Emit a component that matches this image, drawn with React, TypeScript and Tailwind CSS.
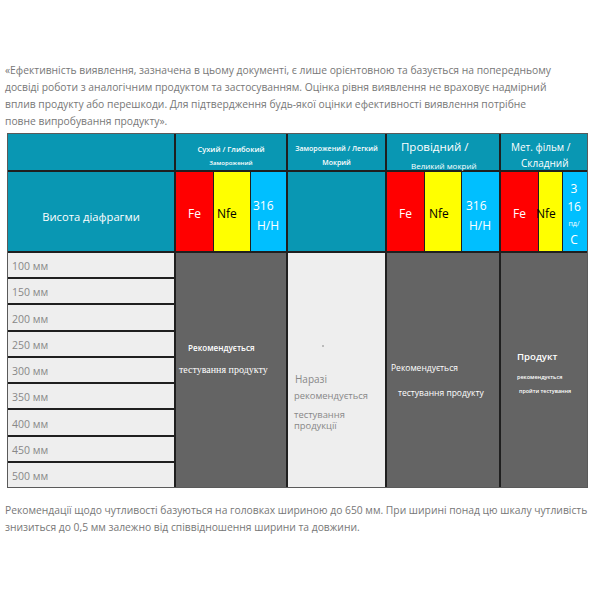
import React from "react";

const rowStarts = [
  "row-start-3",
  "row-start-4",
  "row-start-5",
  "row-start-6",
  "row-start-7",
  "row-start-8",
  "row-start-9",
  "row-start-10",
  "row-start-11",
];
const sizes = ["100", "150", "200", "250", "300", "350", "400", "450", "500"];

export default function App() {
  return (
    <div className="w-[600px] h-[600px] bg-white font-['Open_Sans',sans-serif] px-[5px] pt-[62px]">
      <p className="text-[10.3px] leading-[17px] text-[#777] whitespace-nowrap">
        <span className="block">
          «Ефективність виявлення, зазначена в цьому документі, є лише орієнтовною та базується на попередньому
        </span>
        <span className="block">
          досвіді роботи з аналогічним продуктом та застосуванням. Оцінка рівня виявлення не враховує надмірний
        </span>
        <span className="block">
          вплив продукту або перешкоди. Для підтвердження будь-якої оцінки ефективності виявлення потрібне
        </span>
        <span className="block">повне випробування продукту».</span>
      </p>

      <div className="mt-[3px] ml-[2px] w-[581px] grid grid-cols-[166px_110px_97px_112px_86px] grid-rows-[36px_79px_repeat(9,24.22px)] gap-[2px] bg-[#1f1f1f] border border-[#5a5a5a] text-white">
        {/* header row 1 */}
        <div className="bg-[#0997b3]" />
        <div className="bg-[#0997b3] flex flex-col items-center pt-[8px] font-semibold">
          <div className="text-[7.5px] leading-[14px]">Сухий / Глибокий</div>
          <div className="text-[6px] leading-[14px]">Заморожений</div>
        </div>
        <div className="bg-[#0997b3] flex flex-col items-center pt-[8px] font-semibold">
          <div className="text-[7px] leading-[14px]">Заморожений / Легкий</div>
          <div className="text-[7px] leading-[14px]">Мокрий</div>
        </div>
        <div className="bg-[#0997b3] flex flex-col pt-[5px]">
          <div className="text-[11.5px] leading-[16px] pl-[14px]">Провідний /</div>
          <div className="text-[8px] leading-[12px] mt-[5px] pl-[24px] font-medium">Великий мокрий</div>
        </div>
        <div className="bg-[#0997b3] flex flex-col pt-[5px] font-medium">
          <div className="text-[10px] leading-[16px] pl-[10px]">Мет. фільм /</div>
          <div className="text-[10px] leading-[16px] pl-[20px]">Складний</div>
        </div>

        {/* header row 2 */}
        <div className="bg-[#0997b3] flex items-center justify-center pt-[11px] text-[11.2px]">Висота діафрагми</div>
        <div className="flex gap-px bg-[#1f1f1f] text-[12px]">
          <div className="w-[37px] bg-[#ff0000] flex items-center justify-center pt-[5px]">Fe</div>
          <div className="w-[36px] bg-[#ffff00] flex items-center pl-[3px] pt-[5px] text-black">Nfe</div>
          <div className="flex-1 bg-[#00bfff] flex flex-col justify-center pt-[9px] leading-[20px]">
            <span className="pl-[2px]">316</span>
            <span className="pl-[6px]">H/H</span>
          </div>
        </div>
        <div className="bg-[#0997b3]" />
        <div className="flex gap-px bg-[#1f1f1f] text-[12px]">
          <div className="w-[37px] bg-[#ff0000] flex items-center justify-center pt-[5px]">Fe</div>
          <div className="w-[36px] bg-[#ffff00] flex items-center pl-[4px] pt-[5px] text-black">Nfe</div>
          <div className="flex-1 bg-[#00bfff] flex flex-col justify-center pt-[9px] leading-[20px]">
            <span className="pl-[4px]">316</span>
            <span className="pl-[7px]">H/H</span>
          </div>
        </div>
        <div className="flex gap-px bg-[#1f1f1f] text-[12px]">
          <div className="w-[37px] bg-[#ff0000] flex items-center justify-center pt-[5px]">Fe</div>
          <div className="w-[23px] bg-[#ffff00] flex items-center pt-[5px] text-black overflow-visible">
            <span className="-ml-[3px]">Nfe</span>
          </div>
          <div className="flex-1 bg-[#00bfff] flex flex-col items-center pr-[2px] pt-[8px]">
            <span className="leading-[18px]">3</span>
            <span className="leading-[18px]">16</span>
            <span className="text-[7px] leading-[16px]">пд/</span>
            <span className="leading-[16px]">С</span>
          </div>
        </div>

        {/* body col 1 */}
        {sizes.map((s, i) => (
          <div
            key={s}
            className={`col-start-1 ${rowStarts[i]} bg-[#eeeeee] text-[#888] text-[10.5px] flex items-center pl-[4px] pt-[4px]`}
          >
            {s} мм
          </div>
        ))}

        {/* body col 2 */}
        <div className="col-start-2 row-start-3 row-span-9 bg-[#646464] pt-[84px]">
          <div className="pl-[12px] text-[8.1px] leading-[22px] font-semibold">Рекомендується</div>
          <div className="pl-[3px] text-[10px] leading-[22px] font-['Liberation_Serif',serif]">тестування продукту</div>
        </div>

        {/* body col 3 */}
        <div className="col-start-3 row-start-3 row-span-9 bg-[#eeeeee] text-[#888] pt-[92px]">
          <div className="ml-[34px] w-[2px] h-[2px] bg-[#bbb]" />
          <div className="mt-[24px] pl-[6px] text-[9.4px]">
            <div className="leading-[16.5px] pl-[1px] text-[10px]">Наразі</div>
            <div className="leading-[16.5px]">рекомендується</div>
            <div className="leading-[11px] mt-[5px]">тестування</div>
            <div className="leading-[11px]">продукції</div>
          </div>
        </div>

        {/* body col 4 */}
        <div className="col-start-4 row-start-3 row-span-9 bg-[#646464] pt-[102px] text-[8.5px] font-medium">
          <div className="pl-[4px] leading-[25px]">Рекомендується</div>
          <div className="pl-[11px] leading-[25px]">тестування продукту</div>
        </div>

        {/* body col 5 */}
        <div className="col-start-5 row-start-3 row-span-9 bg-[#646464] pt-[94px] font-semibold">
          <div className="pl-[16px] text-[9.6px] leading-[20px]">Продукт</div>
          <div className="pl-[16px] text-[5.5px] leading-[20px]">рекомендується</div>
          <div className="pl-[18px] text-[5.4px] leading-[8px]">пройти тестування</div>
        </div>
      </div>

      <p className="mt-[14px] text-[10.3px] leading-[17px] text-[#777] whitespace-nowrap">
        <span className="block">
          Рекомендації щодо чутливості базуються на головках шириною до 650 мм. При ширині понад цю шкалу чутливість
        </span>
        <span className="block">знизиться до 0,5 мм залежно від співвідношення ширини та довжини.</span>
      </p>
    </div>
  );
}
